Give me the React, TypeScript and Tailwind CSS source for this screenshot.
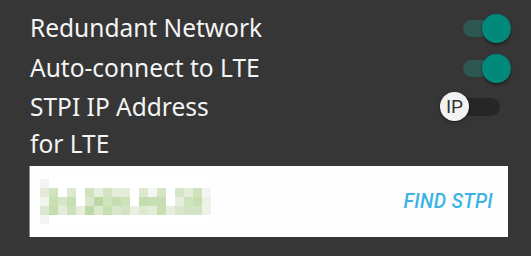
import React from 'react';

const mosaic: string[][] = [
  ['f4f4f2', 'fff', 'fff', 'fff', 'fff', 'fff', 'fff', 'fff', 'fff', 'fff', 'fff', 'fff', 'fff', 'fff', 'fff', 'fff', 'fff', 'fff', 'fff'],
  ['e4ecd9', 'cfe3bd', 'fff', 'dce9d0', 'fff', 'cde2bd', 'e6efdd', 'd4e5c6', 'e4edda', 'e4edda', 'fff', 'dce9d0', 'f5f6f2', 'd4e5c6', 'fff', 'd5e6c8', 'e4edda', 'cfe3bd', 'f4f4f2'],
  ['f2f5ee', 'c8deb3', 'd6e7c8', 'c8deb3', 'fff', 'd9e8cc', 'bcd8a4', 'cfe3bd', 'c4dcae', 'cde2bb', 'fff', 'c4dcae', 'c8deb3', 'c8deb3', 'fff', 'e6efdd', 'cfe3bd', 'c8deb3', 'ecf2e5'],
  ['dae8cd', 'c4dcae', 'e4edda', 'cce1b9', 'e6efdd', 'bfd9a6', 'dae8cd', 'c8deb3', 'd9e7cc', 'd3e4c4', 'eaf1e3', 'dce9d0', 'e4edda', 'c8deb3', 'e6efdd', 'd9e7cc', 'd3e4c4', 'd3e4c4', 'eef3e8'],
  ['f4f4f2', 'fff', 'fff', 'fff', 'fff', 'fff', 'fff', 'fff', 'fff', 'fff', 'fff', 'fff', 'fff', 'fff', 'fff', 'fff', 'fff', 'fff', 'fff'],
];

function OnSwitch() {
  return (
    <div className="relative w-[48px] h-[29px] flex items-center">
      <div className="w-[42px] h-[17px] rounded-full bg-[#2d5751]" />
      <div className="absolute right-0 top-0 w-[29px] h-[29px] rounded-full bg-[#01897b] shadow-[0_2px_3px_rgba(0,0,0,0.45)]" />
    </div>
  );
}

function IpSwitch() {
  return (
    <div className="relative w-[60px] h-[29px] flex items-center justify-end">
      <div className="w-[50px] h-[18px] rounded-full bg-[#262626]" />
      <div className="absolute left-0 top-0 w-[29px] h-[29px] rounded-full bg-[#f2f2f2] shadow-[0_1px_3px_rgba(0,0,0,0.5)] flex items-center justify-center text-[19px] leading-none text-[#333] font-['Roboto',sans-serif]">
        IP
      </div>
    </div>
  );
}

export default function App() {
  return (
    <div className="w-[531px] h-[256px] bg-[#363636] overflow-hidden pt-[8px] font-['Noto_Sans',sans-serif] text-[#f4f4f4]">
      {/* Redundant Network */}
      <div className="h-[40px] pl-[30px] pr-[20px] flex items-center justify-between">
        <span className="text-[24.5px] leading-[40px]">Redundant Network</span>
        <OnSwitch />
      </div>
      {/* Auto-connect */}
      <div className="h-[40px] pl-[30px] pr-[20px] flex items-center justify-between">
        <span className="text-[24.5px] leading-[40px]">Auto-connect to LTE</span>
        <OnSwitch />
      </div>
      {/* STPI IP */}
      <div className="pl-[30px] pr-[31px] flex items-start justify-between">
        <span className="text-[24.5px] leading-[37px]">
          STPI IP Address
          <br />
          for LTE
        </span>
        <div className="mt-[4px]">
          <IpSwitch />
        </div>
      </div>
      {/* address field */}
      <div className="mt-[4px] ml-[29px] w-[479px] h-[71px] bg-[#fefefe] border-l border-[#8a8a8a] flex items-center justify-between pl-[10px] pr-[15px]">
        <div className="flex flex-col">
          {mosaic.map((row, r) => (
            <div key={r} className="flex">
              {row.map((c, i) => (
                <div key={i} className="w-[9px] h-[9px]" style={{ backgroundColor: '#' + c }} />
              ))}
            </div>
          ))}
        </div>
        <span className="italic font-medium text-[19.5px] text-[#3bb3e6] tracking-[0.3px] font-['Roboto',sans-serif]">FIND STPI</span>
      </div>
    </div>
  );
}
